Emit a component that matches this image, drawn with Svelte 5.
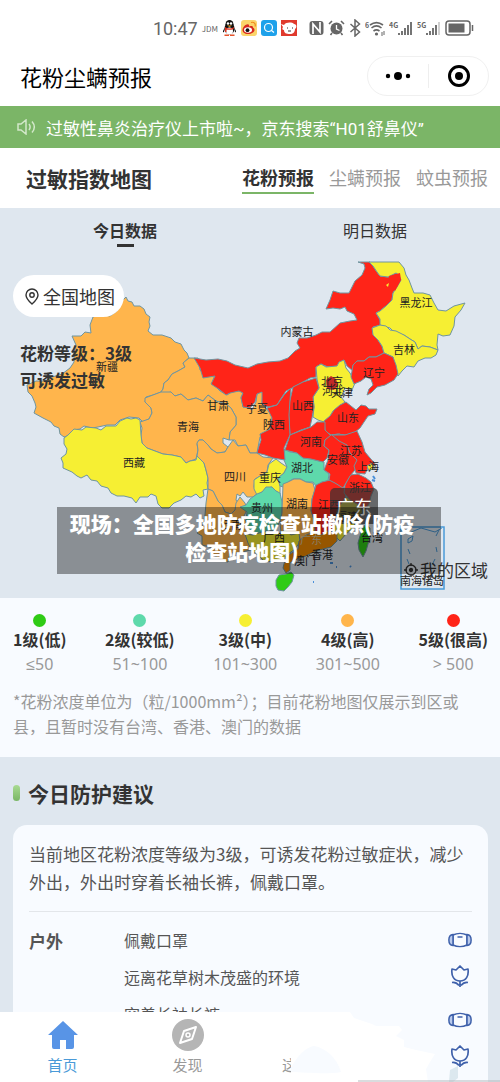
<script>
	let forecast = $state('花粉预报');
	let day = $state('今日数据');

	const forecasts = ['花粉预报', '尘螨预报', '蚊虫预报'];
	const days = ['今日数据', '明日数据'];

	const levels = [
		{ name: '1级(低)', range: '≤50', color: '#2fcb15' },
		{ name: '2级(较低)', range: '51~100', color: '#5ed9ab' },
		{ name: '3级(中)', range: '101~300', color: '#f6ef33' },
		{ name: '4级(高)', range: '301~500', color: '#ffb54c' },
		{ name: '5级(很高)', range: '> 500', color: '#ff2418' }
	];

	// Outline of every province, filled with the colour of its level
	const provinces = [
		// Xinjiang, Gansu, Qinghai, Tibet
		{ level: 4, d: 'M126 297L128 301 132 302 134 306 140 306 144 309 146 314 150 317 149 322 150 326 148 331 153 335 162 335 171 338 175 342 181 344 184 350 187 353 189 358 183 363 185 367 178 371 172 374 168 380 164 383 163 389 161 392 153 395 146 397 145 402 151 408 152 413 149 419 143 422 139 418 129 417 120 420 115 425 107 425 98 427 92 428 84 426 80 429 73 430 67 436 64 437 60 434 59 428 54 426 51 422 43 418 34 413 36 407 35 403 32 396 28 392 27 385 36 381 45 381 52 377 62 374 70 368 74 362 74 352 76 345 72 336 81 336 85 332 91 333 90 325 93 317 100 314 110 316 117 311 120 303z' },
		{ level: 4, d: 'M189 358L198 358 200 370 206 374 203 377 215 375 212 383 220 391 227 395 233 391 240 391 243 393 241 397 243 407 247 407 252 410 256 402 257 394 263 390 262 404 272 415 272 430 260 437 257 453 250 453 246 445 238 446 235 440 229 440 230 432 236 425 236 417 231 408 226 404 216 401 208 395 203 401 196 398 188 400 181 394 175 396 171 392 163 394 161 392 163 389 164 383 168 380 172 374 178 371 185 367 183 363z' },
		{ level: 4, d: 'M145 398L153 395 161 392 165 392 171 392 175 396 181 394 188 400 196 398 203 401 208 395 216 401 226 404 231 408 236 417 236 425 230 432 229 440 223 438 223 443 228 447 225 452 217 453 211 449 208 445 203 440 199 440 197 444 198 450 196 459 190 461 186 463 181 457 172 455 163 454 155 451 147 448 142 443 141 435 142 428 140 422 149 419 152 413 151 408 145 402z' },
		{ level: 3, d: 'M140 420L136 418 131 419 127 418 120 421 116 426 106 426 101 430 96 428 86 427 82 430 74 429 68 435 64 438 64 444 67 449 66 454 61 458 63 463 63 468 72 472 77 476 81 478 87 475 91 480 97 481 101 486 108 488 111 493 117 496 124 496 132 498 136 503 140 497 148 497 151 494 156 496 158 504 162 508 169 508 174 503 181 500 186 496 191 497 196 494 200 498 204 496 203 490 208 489 207 483 208 478 206 470 204 463 200 459 197 456 196 460 190 461 186 463 181 457 172 455 163 454 155 451 147 448 142 443 141 435z' },
		// Sichuan, Yunnan, Chongqing, Guizhou
		{ level: 4, d: 'M197 443L199 440 203 440 208 445 211 449 217 453 225 452 228 447 233 440 238 446 246 445 250 453 257 453 263 457 273 458 268 465 267 472 255 479 254 487 258 493 253 497 247 497 243 492 240 496 237 494 236 500 241 507 235 510 231 514 225 512 222 505 218 501 215 495 213 491 208 489 208 478 206 470 204 463 197 456 198 450z' },
		{ level: 4, d: 'M208 489L213 491 215 495 218 501 222 505 225 512 231 514 235 510 236 503 240 497 245 503 247 510 243 518 250 525 252 534 260 541 255 549 246 551 238 553 230 553 228 562 222 561 214 555 210 547 202 545 202 536 197 533 203 525 205 515 206 503z' },
		{ level: 3, d: 'M276 459L281 463 287 467 284 473 278 478 280 486 280 494 276 491 272 487 267 488 262 492 257 495 254 489 254 480 260 476 267 472 269 464z' },
		{ level: 2, d: 'M240 507L246 505 250 499 257 494 262 492 266 487 272 487 276 491 280 493 282 502 282 513 279 523 276 530 266 531 257 534 251 533 247 527 246 520 247 512z' },
		// Hubei, Hunan, Jiangxi, Fujian, Zhejiang
		{ level: 2, d: 'M284 449L290 452 297 453 303 458 311 459 319 461 324 462 324 470 329 474 328 481 322 482 316 486 313 482 306 482 301 479 293 479 288 482 283 487 280 486 278 478 284 473 287 467 284 460z' },
		{ level: 4, d: 'M283 484L288 482 294 479 300 479 306 482 313 483 315 490 312 499 311 510 314 519 316 530 309 535 303 540 297 538 291 535 281 532 280 524 282 513z' },
		{ level: 5, d: 'M316 485L322 482 330 480 340 485 347 489 345 499 338 508 335 518 333 530 325 535 320 539 315 531 314 520 311 511 312 499z' },
		{ level: 3, d: 'M346 497L353 499 360 505 363 512 357 519 353 528 346 534 340 541 335 536 334 526 338 508z' },
		{ level: 5, d: 'M350 475L358 474 366 478 371 482 374 489 371 496 369 504 364 511 357 504 350 500 344 493 345 485z' },
		// Guangxi, Guangdong, Hainan, Taiwan
		{ level: 3, d: 'M245 534L253 535 262 532 270 531 278 534 285 530 291 535 299 533 300 542 294 550 288 554 282 561 274 562 264 561 258 555 252 551 248 543z' },
		{ level: 'here', d: 'M299 541L306 535 314 532 321 535 327 531 337 532 337 541 331 547 323 549 314 552 306 556 297 559 290 563 290 570 286 573 283 568 285 560 290 554 298 549z' },
		{ level: 1, d: 'M276 580L279 575 286 574 291 572 294 575 292 582 288 587 284 591 278 590 276 586z' },
		{ level: 1, d: 'M366 524L370 528 370 536 368 544 366 551 363 557 359 550 358 543 360 536 362 529z' },
		// Inner Mongolia, Hebei, the north-east
		{ level: 5, d: 'M194 358L206 360 218 359 227 361 235 365 248 368 257 364 268 362 280 361 288 358 295 351 300 348 297 343 299 338 307 338 316 335 322 332 330 332 340 323 350 321 357 320 354 314 347 311 345 307 340 309 333 308 326 309 330 300 333 291 340 293 349 293 352 287 355 281 362 275 365 268 364 264 358 262 370 262 373 266 377 272 380 276 388 277 396 273 399 275 401 280 397 287 393 293 392 300 386 306 380 311 376 313 380 320 381 325 373 327 373 334 378 340 382 346 384 353 376 357 369 357 364 361 357 361 353 365 353 371 347 366 344 360 341 362 338 366 328 367 321 364 316 367 316 377 310 378 303 382 294 387 286 391 280 400 277 405 268 407 262 404 262 392 257 394 255 402 250 408 243 407 241 398 243 393 239 391 230 393 226 395 220 390 211 384 215 376 203 378 200 368z' },
		{ level: 3, d: 'M316 367L321 364 326 367 337 366 339 362 344 360 346 368 350 373 355 383 352 390 345 388 341 397 345 402 340 406 333 411 330 417 324 422 318 420 313 417 314 407 313 397 319 388 317 379z' },
		{ level: 3, d: 'M369 262L399 262 404 268 406 275 409 280 412 288 414 293 423 293 430 295 434 303 438 310 446 311 454 306 465 303 461 310 455 317 454 326 450 335 443 336 438 334 437 345 438 350 430 347 422 346 418 349 415 342 410 339 404 335 396 334 390 328 380 325 380 319 376 313 380 311 386 306 392 300 393 293 397 287 401 280 399 275 396 273 388 277 380 276 377 272 373 266z' },
		{ level: 3, d: 'M372 328L380 325 386 326 390 330 396 331 404 335 410 339 415 342 418 349 422 346 430 347 438 350 436 355 431 358 425 358 418 361 414 367 407 366 402 371 398 376 395 368 393 357 384 353 382 346 378 340 373 335z' },
		{ level: 5, d: 'M353 365L357 361 364 361 369 357 376 357 384 353 393 357 396 365 398 374 394 380 385 385 377 387 371 393 367 395 369 389 373 385 371 379 366 377 361 381 354 384 351 377z' },
		// The red block in the middle
		{ level: 5, d: 'M316 378L319 388 313 397 314 407 312 418 310 427 301 430 290 435 289 420 288 408 291 396 293 387 303 382z' },
		{ level: 5, d: 'M291 388L290 400 289 415 290 435 284 448 285 460 273 458 265 455 257 453 259 446 261 440 260 434 270 429 272 418 267 408 277 405 284 395z' },
		{ level: 5, d: 'M324 421L330 416 334 410 340 405 346 402 351 406 356 410 361 405 366 406 369 409 377 409 375 414 368 416 364 422 360 428 354 433 345 435 338 434 331 435 325 431z' },
		{ level: 5, d: 'M290 435L300 431 311 427 317 422 325 422 325 430 331 436 325 440 324 446 329 450 327 458 323 462 311 459 303 458 297 453 285 450z' },
		{ level: 5, d: 'M331 435L340 434 347 442 352 450 358 460 355 470 350 476 343 488 335 483 329 480 330 474 324 470 328 460 329 450 324 446 325 440z' },
		{ level: 5, d: 'M332 435L345 435 357 431 362 442 365 452 370 458 376 465 368 468 365 474 356 473 354 466 357 460 350 453 347 445 339 441z' },
		{ level: 3, d: 'M367 466L372 463 374 468 369 471z' }
	];

	const labels = [
		['新疆', 107, 367], ['西藏', 134, 463], ['青海', 188, 427], ['甘肃', 218, 406],
		['宁夏', 257, 409], ['陕西', 274, 425], ['山西', 303, 406], ['内蒙古', 297, 332],
		['黑龙江', 416, 303], ['吉林', 404, 350], ['辽宁', 374, 373], ['北京', 332, 382],
		['河北', 333, 391], ['天津', 342, 393], ['山东', 348, 418], ['河南', 311, 442],
		['江苏', 351, 451], ['安徽', 338, 460], ['上海', 368, 467], ['湖北', 302, 468],
		['重庆', 270, 478], ['四川', 235, 477], ['浙江', 360, 488], ['湖南', 297, 504],
		['江西', 329, 505], ['贵州', 262, 508], ['云南', 231, 525], ['广西', 274, 538],
		['广东', 311, 540, 'faint'], ['福建', 347, 517], ['台湾', 372, 538], ['香港', 322, 555],
		['澳门', 305, 561], ['南海诸岛', 422, 581]
	];

	const advice = ['佩戴口罩', '远离花草树木茂盛的环境', '穿着长袖长裤'];

	function levelColor(level) {
		return level === 'here' ? '#f38b00' : levels[level - 1].color;
	}
</script>

{#snippet signal(label, faded)}
	<svg width="24" height="18" viewBox="0 0 24 18">
		<text x="0" y="9" class="net">{label}</text>
		<path d="M10 14v2M13 12v4M16 9v7M19 6v10" stroke="#666" stroke-width="1.800" />
		<path d="M22 3v13" stroke={faded ? '#ccc' : '#666'} stroke-width="1.800" />
	</svg>
{/snippet}

{#snippet mask()}
	<svg width="24" height="24" viewBox="0 0 24 24" fill="none" stroke="#3f61ab" stroke-width="1.500">
		<path d="M5 7c4-2 10-2 14 0v10c-4 2-10 2-14 0z" />
		<path d="M5 6.500C-.5 7-.5 17 5 17.500zM19 6.500c5.500.5 5.500 10.500 0 11z" fill="#b9caec" />
		<path d="M9.500 9h5" />
	</svg>
{/snippet}

{#snippet tulip()}
	<svg width="24" height="24" viewBox="0 0 24 24" fill="none" stroke="#3f61ab" stroke-width="1.700" stroke-linejoin="round">
		<path d="M4 4l4 1 4-4 4 4 4-1c1 7-2 12-8 12S3 11 4 4z" />
		<path d="M12 16v6M4 17.500c3-.5 5 .5 7 3M20 17.500c-3-.5-5 .5-7 3" />
	</svg>
{/snippet}

<div class="app">
	<header>
		<div class="status">
			<span class="time">10:47</span>
			<span class="jdm">JDM</span>
			<svg width="15" height="16" viewBox="0 0 15 16">
				<ellipse cx="7.500" cy="8.500" rx="5" ry="6" fill="#111" />
				<ellipse cx="7.500" cy="4.500" rx="4" ry="4.500" fill="#111" />
				<path d="M3 8C0 11 1 13 2 12zM12 8c3 3 2 5 1 4z" fill="#111" />
				<ellipse cx="7.500" cy="11" rx="3.500" ry="3.500" fill="#fff" />
				<circle cx="6" cy="3.500" r="1.200" fill="#fff" />
				<circle cx="9" cy="3.500" r="1.200" fill="#fff" />
				<path d="M3 7c3 2 6 2 9 0l-.5 2c-2.500 1-5 1-7 .500V12H3z" fill="#e0301e" />
				<path d="M5 5.500h5L7.500 7z" fill="#f5a623" />
				<path d="M2.500 14.500h4.500v1.500H2.500zM8 14.500h4.500v1.500H8z" fill="#e7532b" />
			</svg>
			<svg width="16" height="16" viewBox="0 0 16 16">
				<rect width="16" height="16" rx="3" fill="#fbd56b" />
				<path d="M1.500 10c0-3 4-6.500 6-5.500 1 .5.5 2 .5 2s4-1.500 4 1c0 .500 1.500.5 1.500 2.500 0 2-3 4-6.500 4s-5.500-2-5.500-4z" fill="#d8281e" />
				<ellipse cx="7" cy="10" rx="4" ry="2.800" fill="#fff" />
				<circle cx="6.500" cy="10.200" r="1.900" fill="#111" />
				<path d="M10 2.500c3-1 5 1.500 4 4" fill="none" stroke="#f08b1d" stroke-width="1.200" />
			</svg>
			<svg width="16" height="16" viewBox="0 0 16 16">
				<rect width="16" height="16" rx="3" fill="#1ea1ea" />
				<circle cx="7.500" cy="7.500" r="4" fill="none" stroke="#fff" stroke-width="1.200" />
				<path d="M10.500 10.500l2.500 2" stroke="#fff" stroke-width="1.200" />
			</svg>
			<svg width="16" height="16" viewBox="0 0 16 16">
				<rect width="16" height="16" fill="#e03a2d" />
				<path d="M0 4l3 1c2-3 8-3 10-1 3 0 3 4 1 5 0 3-2 5-5 5-4 0-6-1-6-4-2 0-2-2-1-3z" fill="#fff" />
				<path d="M6 8h1M11 8h1M7 11h3" stroke="#333" />
			</svg>
			<svg class="nfc" width="15" height="16" viewBox="0 0 15 16">
				<rect x=".5" y="1" width="14" height="14" rx="3" fill="#666" />
				<path d="M4 14V4l7 8V2" fill="none" stroke="#fff" stroke-width="1.700" />
			</svg>
			<svg width="17" height="16" viewBox="0 0 17 16">
				<circle cx="8.500" cy="8.500" r="6" fill="#666" />
				<path d="M1 4l3-3M16 4l-3-3M4 13l-1.500 2M13 13l1.500 2" stroke="#666" stroke-width="1.600" />
				<path d="M8.500 5v4l3 1.500" fill="none" stroke="#fff" stroke-width="1.300" />
			</svg>
			<svg width="12" height="18" viewBox="0 0 12 18" fill="none" stroke="#666" stroke-width="1.500">
				<path d="M1.500 5l9 8L6 17V1l4.500 4-9 8" />
			</svg>
			<svg width="20" height="18" viewBox="0 0 20 18" fill="none" stroke="#666" stroke-width="1.600">
				<text x="0" y="9" class="net">6</text>
				<path d="M5 6c4-3 9-3 13 0M6.500 9c3-2.500 7-2.500 10 0M8.500 12c2-1.500 4-1.500 6 0" />
				<circle cx="11.500" cy="15" r=".8" />
				<path d="M17 13v4M19 12v4" stroke-width="1" />
			</svg>
			{@render signal('4G', false)}
			{@render signal('5G', true)}
			<svg width="29" height="16" viewBox="0 0 29 16">
				<rect x="1" y="1" width="24" height="14" rx="3" fill="none" stroke="#666" stroke-width="1.500" />
				<rect x="3.500" y="3.500" width="16" height="9" fill="#666" />
				<path d="M27.500 5v6" stroke="#666" stroke-width="1.500" />
			</svg>
		</div>

		<div class="titlebar">
			<h1>花粉尘螨预报</h1>
			<div class="capsule">
				<button aria-label="更多">
					<svg width="26" height="10" viewBox="0 0 26 10"><circle cx="3" cy="5" r="2.200" /><circle cx="13" cy="5" r="4" /><circle cx="23" cy="5" r="2.200" /></svg>
				</button>
				<button aria-label="关闭">
					<svg width="24" height="24" viewBox="0 0 24 24"><circle cx="12" cy="12" r="9.500" fill="none" stroke="#000" stroke-width="3" /><circle cx="12" cy="12" r="4" /></svg>
				</button>
			</div>
		</div>
	</header>

	<main>
		<div class="notice">
			<svg width="19" height="16" viewBox="0 0 19 16" fill="none" stroke="#d3e8ca" stroke-width="1.500">
				<path d="M1 5h3l5-4v14l-5-4H1zM12 5c1.500 2 1.500 4 0 6M15 2.500c3 3.500 3 7.500 0 11" />
			</svg>
			<span>过敏性鼻炎治疗仪上市啦~，京东搜索“H01舒鼻仪”</span>
		</div>

		<div class="heading">
			<h2>过敏指数地图</h2>
			<nav class="forecasts">
				{#each forecasts as name}
					<button class:active={forecast === name} onclick={() => (forecast = name)}>{name}</button>
				{/each}
			</nav>
		</div>

		<section class="map">
			<div class="days">
				{#each days as name}
					<button class:active={day === name} onclick={() => (day = name)}>{name}</button>
				{/each}
			</div>

			<svg class="china" viewBox="0 248 500 350">
				<g stroke="#6f95a0" stroke-width="1" stroke-linejoin="round">
					{#each provinces as p}
						<path d={p.d} fill={levelColor(p.level)} />
					{/each}
				</g>
				<path d="M326 380l5-4 5 3 2 6-4 5-7-1z" fill="#c32a27" />
				<path d="M389 276l11-3 1 7-6 11-4-4-1-5z" fill="#ff2418" />
				<path d="M386 285l3-2-1 4z" fill="#f6ef33" />
				<path d="M373 476l2 3M372 480l3 1M350 566l1 1M330 563l3 0M313 582l1 0M336 567l1 0" stroke="#4a90d9" stroke-width="2" />
				<g fill="none" stroke="#4a9ad8" stroke-width="1.500">
					<rect x="401" y="527" width="43" height="62" />
					<path d="M402 529l7 4 12-5 14 4 7-4M408 539l5-3-1 5-4 2zM408 549l2 5M407 559l2 5M436 536l3-6M436 547l1 5M435 559l-3 6" stroke-width="1" />
				</g>
				{#each labels as [name, x, y, tone]}
					<text class={tone} {x} y={y + 4}>{name}</text>
				{/each}
			</svg>

			<div class="overview">
				<button class="pill">
					<svg width="14" height="17" viewBox="0 0 14 17" fill="none" stroke="#333" stroke-width="1.400">
						<path d="M7 16C3 12.500 1 10 1 7a6 6 0 0 1 12 0c0 3-2 5.500-6 9z" /><circle cx="7" cy="7" r="2.200" />
					</svg>
					全国地图
				</button>
				<p>花粉等级：3级<br />可诱发过敏</p>
			</div>

			<span class="tooltip">广东</span>
			<button class="mine">
				<svg width="14" height="14" viewBox="0 0 14 14" fill="none" stroke="#333" stroke-width="1.300">
					<circle cx="7" cy="7" r="5" /><circle cx="7" cy="7" r="1.500" fill="#333" /><path d="M7 0v3M7 11v3M0 7h3M11 7h3" />
				</svg>
				我的区域
			</button>
			<div class="caption">现场：全国多地防疫检查站撤除(防疫<br />检查站地图)</div>
		</section>

		<section class="legend">
			<ul>
				{#each levels as level}
					<li>
						<i style="background: {level.color}"></i>
						<b>{level.name}</b>
						<span>{level.range}</span>
					</li>
				{/each}
			</ul>
			<p>*花粉浓度单位为（粒/1000mm²）；目前花粉地图仅展示到区或县，且暂时没有台湾、香港、澳门的数据</p>
		</section>

		<section class="advice">
			<h2>今日防护建议</h2>
			<div class="card">
				<p>当前地区花粉浓度等级为3级，可诱发花粉过敏症状，减少外出，外出时穿着长袖长裤，佩戴口罩。</p>
				<div class="group">
					<h3>户外</h3>
					<ul>
						{#each advice as item}
							<li>{item}</li>
						{/each}
					</ul>
					<div class="icons">
						<div>{@render mask()}{@render tulip()}</div>
						<div>{@render mask()}{@render tulip()}</div>
					</div>
				</div>
			</div>
		</section>
	</main>

	<nav class="tabbar">
		<svg class="backdrop" viewBox="0 0 500 70" preserveAspectRatio="none">
			<path d="M0 0H350L354 6 372 12 376 14 399 14 402 18 396 24 404 28 404 35 416 38 435 42 430 50 426 57 428 70H0z" fill="#fff" />
			<path d="M291 56C297 44 306 35 314 34 326 36 337 46 341 60 325 63 305 60 291 60z" fill="#f8fbff" />
			<path d="M450 58l8-4v12l-5 4h-4z" fill="#dce8ef" />
			<path d="M358 69h142" stroke="#b5b9bd" />
		</svg>
		<a href="#home" class="active">
			<svg width="30" height="30" viewBox="0 0 30 30"><path d="M15 1l15 14h-4v12q0 2-2 2h-6v-9h-6v9H6q-2 0-2-2V15H0z" fill="#5894e6" /></svg>
			首页
		</a>
		<a href="#discover">
			<svg width="32" height="32" viewBox="0 0 32 32">
				<circle cx="16" cy="16" r="16" fill="#b5b5b5" />
				<path d="M24 8l-4 12-12 4 4-12z" fill="none" stroke="#fff" stroke-width="2" stroke-linejoin="round" /><circle cx="16" cy="16" r="2" fill="none" stroke="#fff" stroke-width="1.500" />
			</svg>
			发现
		</a>
		<span class="rest">这</span>
	</nav>
</div>

<style>
	:global(body) {
		background: #dfe7ef;
	}

	.app {
		position: relative;
		display: flex;
		flex-direction: column;
		height: 100vh;
		overflow: hidden;
		color: #333;
		font-family: 'Noto Sans CJK SC', sans-serif;
		font-size: 16px;
	}

	h1,
	h2,
	h3,
	p,
	ul {
		margin: 0;
		padding: 0;
		list-style: none;
	}

	button {
		padding: 0;
		border: 0;
		background: none;
		color: inherit;
		font: inherit;
		cursor: pointer;
	}

	svg {
		flex: none;
		display: block;
	}

	/* Header */

	header {
		background: #fff;
	}

	.status {
		display: flex;
		justify-content: flex-end;
		align-items: center;
		gap: 4px;
		height: 56px;
		padding-right: 26px;
		color: #666;
	}

	.time {
		font-family: Roboto, sans-serif;
		font-size: 18px;
	}

	.jdm {
		font-size: 8px;
	}

	.nfc {
		margin-left: 8px;
	}

	.net {
		fill: #666;
		stroke: none;
		font-size: 7px;
		font-weight: 700;
	}

	.titlebar {
		display: flex;
		justify-content: space-between;
		align-items: center;
		padding: 0 11px 10px 20px;
		color: #000;
	}

	h1 {
		font-size: 22px;
		font-weight: 400;
		line-height: 40px;
	}

	.capsule {
		display: flex;
		width: 120px;
		height: 38px;
		border: 1px solid #f0f0f0;
		border-radius: 20px;
	}

	.capsule button {
		flex: 1;
		display: flex;
		justify-content: center;
		align-items: center;
	}

	.capsule button + button::before {
		content: '';
		width: 1px;
		height: 24px;
		margin-right: 18px;
		background: #eee;
	}

	.capsule button + button {
		justify-content: flex-start;
	}

	/* Scrolling content */

	main {
		flex: 1;
		min-height: 0;
		overflow-y: auto;
		scrollbar-width: none;
	}

	.notice {
		display: flex;
		align-items: center;
		gap: 10px;
		height: 42px;
		padding: 0 17px;
		background: #7bb567;
		color: #fff;
		font-family: Roboto, 'Noto Sans CJK SC', sans-serif;
		font-size: 17px;
		white-space: nowrap;
	}

	.heading {
		display: flex;
		justify-content: space-between;
		align-items: center;
		height: 60px;
		padding: 0 12px 0 26px;
		background: #fff;
	}

	h2 {
		font-size: 21px;
		font-weight: 700;
		line-height: 32px;
	}

	.forecasts {
		display: flex;
		gap: 15px;
		color: #999;
		font-size: 18px;
		line-height: 30px;
	}

	.forecasts button {
		border-bottom: 2px solid transparent;
	}

	.forecasts .active {
		border-color: #7bb567;
		color: #333;
		font-weight: 700;
	}

	/* Map */

	.map {
		position: relative;
		background: #dfe7ef;
	}

	.days {
		display: flex;
		height: 40px;
	}

	.days button {
		flex: 1;
		display: flex;
		flex-direction: column;
		align-items: center;
		padding-top: 8px;
		line-height: 28px;
	}

	.days .active {
		font-weight: 700;
	}

	.days .active::after {
		content: '';
		width: 17px;
		height: 3px;
		background: #333;
	}

	.china {
		width: 100%;
	}

	.china text {
		fill: #222;
		font-size: 11px;
		text-anchor: middle;
	}

	.china .faint {
		fill: #d9c9a0;
	}

	.overview {
		position: absolute;
		top: 67px;
		left: 13px;
	}

	.pill {
		display: flex;
		align-items: center;
		gap: 4px;
		height: 42px;
		padding: 0 9px 0 12px;
		border-radius: 21px;
		background: #fff;
		font-size: 18px;
	}

	.overview p {
		margin: 22px 0 0 7px;
		font-size: 17px;
		font-weight: 700;
		line-height: 27px;
	}

	.tooltip {
		position: absolute;
		top: 280px;
		left: 66%;
		padding: 0 6px;
		border-radius: 5px;
		background: rgba(50, 50, 50, 0.7);
		color: #fff;
		font-size: 18px;
		line-height: 36px;
	}

	.mine {
		position: absolute;
		right: 12px;
		bottom: 14px;
		display: flex;
		align-items: center;
		gap: 2px;
		font-size: 17px;
		line-height: 28px;
	}

	.caption {
		position: absolute;
		right: 59px;
		bottom: 24px;
		left: 57px;
		padding: 2px 14px 9px 0;
		background: rgba(0, 0, 0, 0.38);
		color: #fff;
		font-size: 21px;
		font-weight: 900;
		line-height: 28px;
		text-align: center;
	}

	/* Legend */

	.legend {
		padding: 16px 12px 18px 13px;
		background: #f8fbff;
		color: #999;
	}

	.legend ul {
		display: flex;
		justify-content: space-between;
	}

	.legend li {
		display: flex;
		flex-direction: column;
		align-items: center;
		line-height: 25px;
	}

	.legend i {
		width: 13px;
		height: 13px;
		border-radius: 50%;
	}

	.legend b {
		color: #333;
		font-weight: 700;
	}

	.legend span {
		font-family: 'Noto Sans', sans-serif;
	}

	.legend p {
		margin-top: 12px;
		padding-right: 12px;
		line-height: 25px;
	}

	/* Advice */

	.advice {
		padding: 20px 12px 0 13px;
	}

	.advice h2 {
		display: flex;
		align-items: center;
		gap: 8px;
	}

	.advice h2::before {
		content: '';
		width: 7px;
		height: 16px;
		border-radius: 4px;
		background: linear-gradient(#a9db92, #79b665);
	}

	.card {
		margin-top: 16px;
		padding: 15px 16px 80px;
		border-radius: 14px;
		background: #f8fbff;
		color: #555;
	}

	.card p {
		padding-bottom: 15px;
		border-bottom: 1px solid #e3e6ea;
		font-size: 17px;
		line-height: 28px;
	}

	.group {
		display: flex;
		padding-top: 10px;
		line-height: 37px;
	}

	h3 {
		width: 95px;
		font-size: 17px;
		font-weight: 700;
	}

	.group ul {
		flex: 1;
	}

	.icons {
		display: flex;
		flex-direction: column;
		gap: 19px;
		padding-top: 6px;
	}

	.icons div {
		display: flex;
		flex-direction: column;
		gap: 13px;
	}

	/* Bottom tabs */

	.tabbar {
		position: absolute;
		right: 0;
		bottom: 0;
		left: 0;
		display: flex;
		height: 70px;
	}

	.backdrop {
		position: absolute;
		width: 100%;
		height: 100%;
	}

	.tabbar a {
		position: relative;
		width: 25%;
		display: flex;
		flex-direction: column;
		justify-content: flex-end;
		align-items: center;
		gap: 2px;
		padding-bottom: 5px;
		color: #999;
		font-size: 15px;
		line-height: 24px;
		text-decoration: none;
	}

	.tabbar .active {
		gap: 3px;
		color: #4a9ad8;
	}

	.rest {
		position: relative;
		align-self: flex-end;
		width: 9px;
		margin-left: 32px;
		padding-bottom: 5px;
		overflow: hidden;
		color: #999;
		font-size: 15px;
		line-height: 24px;
	}
</style>
